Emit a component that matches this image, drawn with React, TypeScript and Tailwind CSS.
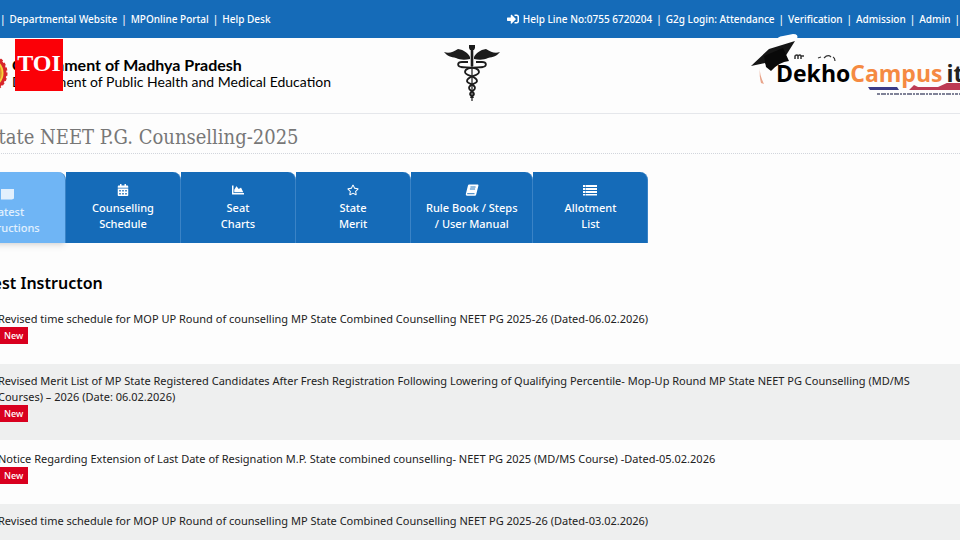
import React from 'react';
import { FaCalendarAlt, FaChartArea, FaRegStar, FaSignInAlt } from 'react-icons/fa';

interface Tab {
  icon: React.ReactNode;
  lines: [string, string];
  active?: boolean;
}

interface Notice {
  id: number;
  text: string;
}

const BookIcon = () => (
  <svg viewBox="0 0 14 12" className="h-3 w-4" aria-hidden="true">
    <path d="M4.2.5h8.2c.8 0 1.2.5 1 1.3l-2.200 8.700c-.2.800-.6 1.200-1.300 1.200H2.200C1.100 11.700.600 11 .9 9.800L2.900 1.700C3.100.9 3.500.5 4.200.5z" fill="currentColor" />
    <path d="M5.400 3h5.200M4.900 5h5.200M2.200 9.700h7.300" stroke="#156bb8" strokeWidth="0.9" />
  </svg>
);

const ListIcon = () => (
  <svg viewBox="0 0 14 12" className="h-3 w-4" fill="currentColor" aria-hidden="true">
    <path d="M0 1h2v2H0zM2.500 1H14v2H2.500zM0 4h2v2H0zM2.500 4H14v2H2.500zM0 7h2v2H0zM2.500 7H14v2H2.500zM0 10h2v1.500H0zM2.500 10H14v1.500H2.500z" />
  </svg>
);

const SquareIcon = () => (
  <svg viewBox="0 0 14 12" className="h-3 w-4" fill="currentColor" aria-hidden="true">
    <path d="M0 1h13v9.500l-2 1H0z" />
  </svg>
);

const tabs: Tab[] = [
  { icon: <SquareIcon />, lines: ['Latest', 'Instructions'], active: true },
  { icon: <FaCalendarAlt />, lines: ['Counselling', 'Schedule'] },
  { icon: <FaChartArea />, lines: ['Seat', 'Charts'] },
  { icon: <FaRegStar />, lines: ['State', 'Merit'] },
  { icon: <BookIcon />, lines: ['Rule Book / Steps', '/ User Manual'] },
  { icon: <ListIcon />, lines: ['Allotment', 'List'] },
];

const notices: Notice[] = [
  { id: 1, text: 'Revised time schedule for MOP UP Round of counselling MP State Combined Counselling NEET PG 2025-26 (Dated-06.02.2026)' },
  { id: 2, text: 'Revised Merit List of MP State Registered Candidates After Fresh Registration Following Lowering of Qualifying Percentile- Mop-Up Round MP State NEET PG Counselling (MD/MS Courses) – 2026 (Date: 06.02.2026)' },
  { id: 3, text: 'Notice Regarding Extension of Last Date of Resignation M.P. State combined counselling- NEET PG 2025 (MD/MS Course) -Dated-05.02.2026' },
  { id: 4, text: 'Revised time schedule for MOP UP Round of counselling MP State Combined Counselling NEET PG 2025-26 (Dated-03.02.2026)' },
];

function TopBar() {
  return (
    <div className="flex h-[38px] items-center justify-between bg-[#156bb8] text-[10px] font-medium whitespace-nowrap text-white">
      <nav className="flex gap-1">
        <span>|</span>
        <a href="#department">Departmental Website</a>
        <span>|</span>
        <a href="#portal">MPOnline Portal</a>
        <span>|</span>
        <a href="#help">Help Desk</a>
      </nav>
      <nav className="flex items-center gap-1">
        <FaSignInAlt className="h-3 w-3" />
        <a href="#helpline">Help Line No:0755 6720204</a>
        <span>|</span>
        <a href="#attendance">G2g Login: Attendance</a>
        <span>|</span>
        <a href="#verification">Verification</a>
        <span>|</span>
        <a href="#admission">Admission</a>
        <span>|</span>
        <a href="#admin">Admin</a>
        <span>|</span>
      </nav>
    </div>
  );
}

function Emblem() {
  return (
    <svg viewBox="0 0 40 40" className="-ml-8 h-10 w-10 shrink-0" aria-hidden="true">
      <circle cx="20" cy="20" r="17" fill="#f5d33c" stroke="#d8262c" strokeWidth="3" />
      <circle cx="20" cy="20" r="18.500" fill="none" stroke="#d8262c" strokeWidth="2" strokeDasharray="3 2" />
      <circle cx="20" cy="20" r="13" fill="#7cb53c" stroke="#e8862a" strokeWidth="1.500" />
    </svg>
  );
}

function Caduceus() {
  return (
    <svg viewBox="0 0 56 58" className="h-[58px] w-14" fill="none" stroke="#1c1c1c" aria-label="Caduceus">
      <path d="M0 8c5 2 9 0 14-3 6 1 10 4 12 8v2c-5 1-10 1-14-1-5-1-9-2-12-6zM56 8c-5 2-9 0-14-3-6 1-10 4-12 8v2c5 1 10 1 14-1 5-1 9-2 12-6z" fill="#1c1c1c" stroke="none" />
      <path d="M25 1h6v3l-1 2h-4l-1-2z" fill="#1c1c1c" stroke="none" />
      <path d="M28 4v18" strokeWidth="2.600" />
      <path d="M28 22v35" strokeWidth="1.200" />
      <path d="M24 18h-6c-5 0-5 4-1 5 5 1 18-1 18 5 0 4-12 4-12 9 0 3 8 3 8 7 0 3-5 3-5 6 0 2 3 2 3 4" strokeWidth="1.800" />
      <path d="M32 18h6c5 0 5 4 1 5-5 1-18-1-18 5 0 4 12 4 12 9 0 3-8 3-8 7 0 3 5 3 5 6 0 2-3 2-3 4" strokeWidth="1.800" />
    </svg>
  );
}

function CampusLogo() {
  return (
    <div className="relative flex w-[184px] items-center self-stretch whitespace-nowrap">
      <svg viewBox="0 0 60 52" className="absolute -top-1 -left-[25px] h-[52px] w-[60px]" aria-hidden="true">
        <path d="M24 9q2-7 8-7l10-2q6 0 4 5l-5 3z" fill="#fff" />
        <path d="m0 32 18-17 26-8-10 16-17 11-3-5z" fill="#161616" />
        <path d="m13 22 19-8 6 13q-10 1-18 10l-5-4z" fill="#090909" />
        <path d="M9 33q-1 7 4 17l-3-1q-2-7-1-16" fill="#e9a58b" />
        <path d="M44 25v-3q2-2 3 0v3m0-3q2-2 3 0v3m0-3h3" fill="none" stroke="#333" strokeWidth="1.500" />
      </svg>
      <svg viewBox="0 0 20 8" className="absolute top-4 left-[41px] h-2 w-5" fill="none" stroke="#333" aria-hidden="true">
        <path d="m1 4 3-1M7 4q4-4 7-1M16 3q2 1 2 4" strokeWidth="1.200" />
      </svg>
      <p className="font-['Open_Sans'] text-[23px] leading-6 font-bold">
        <span className="text-black">Dekho</span>
        <span className="text-[#f58a42]">Campus</span>
        <span className="ml-1 text-[#222]">it</span>
      </p>
      <svg viewBox="0 0 92 16" className="absolute right-0 bottom-2 h-4 w-[92px]" aria-hidden="true">
        <path d="M0 4h29l2 3H2z" fill="#393a88" />
        <path d="m41 7 5-5 4 2h20l11-5h12v8z" fill="#bd3a54" />
        <path d="M9 11h83" stroke="#555a75" strokeWidth="1.500" strokeDasharray="3 1 5 1 2 1" />
      </svg>
    </div>
  );
}

function Header() {
  return (
    <header className="relative flex h-[76px] items-center border-b border-gray-200 pr-4 pb-[6px] text-black">
      <div className="flex flex-1 basis-0 items-center gap-1">
        <Emblem />
        <div className="font-['Lato'] text-sm leading-[17px] whitespace-nowrap">
          <p className="text-base leading-[17px] font-bold">Government of Madhya Pradesh</p>
          <p>Department of Public Health and Medical Education</p>
        </div>
      </div>
      <div className="absolute top-[1px] left-[15px] flex h-[52px] w-12 items-center justify-center bg-[#fb0007] font-['Liberation_Serif'] text-2xl leading-6 font-bold text-white">
        <span className="pb-1">TOI</span>
      </div>
      <Caduceus />
      <div className="-mr-4 flex flex-1 basis-0 justify-end self-stretch pl-4">
        <CampusLogo />
      </div>
    </header>
  );
}

function TabButton({ tab }: { tab: Tab }) {
  return (
    <button
      className={`flex h-[71px] min-w-[115px] flex-col items-center rounded-tr-lg border-r border-[#3a83c6] px-[15px] text-[11px] leading-4 font-medium ${
        tab.active ? 'bg-[#6fb5f5] pt-4 text-white/80 shadow-md' : 'bg-[#156bb8] pt-3 text-white'
      }`}
    >
      <span className="mb-1 flex h-3 items-center text-xs">{tab.icon}</span>
      <span>{tab.lines[0]}</span>
      <span>{tab.lines[1]}</span>
    </button>
  );
}

export default function App() {
  return (
    <div className="min-h-screen overflow-hidden bg-[#fdfdfd] font-['Noto_Sans','Open_Sans',sans-serif] text-[#222]">
      <TopBar />
      <Header />
      <main>
        <h1 className="-ml-[50px] flex h-10 items-center border-b border-dotted border-gray-300 pt-[6px] font-['DejaVu_Serif_Condensed','DejaVu_Serif',serif] text-xl whitespace-nowrap text-[#777]">
          MP State NEET P.G. Counselling-2025
        </h1>
        <div className="mt-[18px] -ml-[49px] flex">
          {tabs.map((tab) => (
            <TabButton key={tab.lines[0]} tab={tab} />
          ))}
        </div>
        <h2 className="mt-7 -ml-8 text-base leading-6 font-semibold text-black">Latest Instructon</h2>
        <ul className="mt-[5px] -ml-[2px] text-[11px] leading-4">
          {notices.map((notice) => (
            <li key={notice.id} className="border-[#fdfdfd] pt-[9px] pr-10 pb-[18px] odd:border-y-2 even:bg-[#eeefef]">
              <a href={`#notice-${notice.id}`} className="block">{notice.text}</a>
              {notice.id < 4 && (
                <span className="block h-[17px] w-[30px] bg-[#d9001f] pl-[6px] text-[9px] leading-[17px] font-medium text-white">New</span>
              )}
            </li>
          ))}
        </ul>
      </main>
    </div>
  );
}
